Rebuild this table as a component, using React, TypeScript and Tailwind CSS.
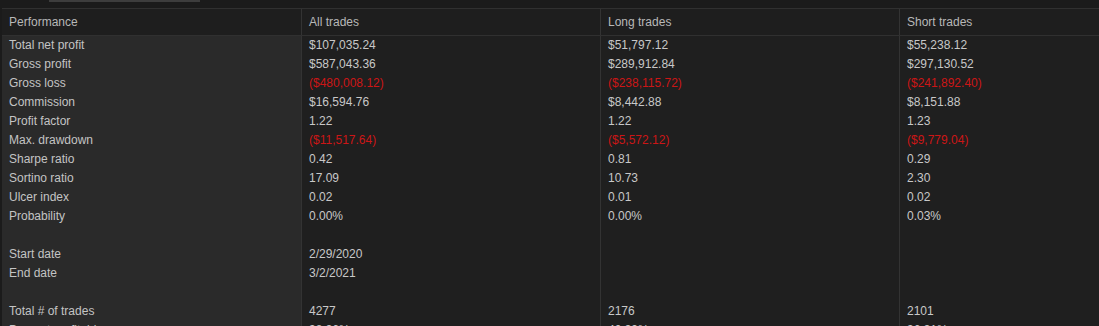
const rows: { label: string; all: string; long: string; short: string; neg?: boolean }[] = [
  { label: "Total net profit", all: "$107,035.24", long: "$51,797.12", short: "$55,238.12" },
  { label: "Gross profit", all: "$587,043.36", long: "$289,912.84", short: "$297,130.52" },
  { label: "Gross loss", all: "($480,008.12)", long: "($238,115.72)", short: "($241,892.40)", neg: true },
  { label: "Commission", all: "$16,594.76", long: "$8,442.88", short: "$8,151.88" },
  { label: "Profit factor", all: "1.22", long: "1.22", short: "1.23" },
  { label: "Max. drawdown", all: "($11,517.64)", long: "($5,572.12)", short: "($9,779.04)", neg: true },
  { label: "Sharpe ratio", all: "0.42", long: "0.81", short: "0.29" },
  { label: "Sortino ratio", all: "17.09", long: "10.73", short: "2.30" },
  { label: "Ulcer index", all: "0.02", long: "0.01", short: "0.02" },
  { label: "Probability", all: "0.00%", long: "0.00%", short: "0.03%" },
  { label: "", all: "", long: "", short: "" },
  { label: "Start date", all: "2/29/2020", long: "", short: "" },
  { label: "End date", all: "3/2/2021", long: "", short: "" },
  { label: "", all: "", long: "", short: "" },
  { label: "Total # of trades", all: "4277", long: "2176", short: "2101" },
  { label: "Percent profitable", all: "38.36%", long: "40.39%", short: "36.31%" },
];

function Cell({ value, neg, first }: { value: string; neg?: boolean; first?: boolean }) {
  return (
    <div
      className={`h-[19px] leading-[19px] px-[7px] whitespace-nowrap ${
        first ? "bg-[#2a2a2a] text-[#c4c4c4]" : "border-l border-[#333333] bg-[#1f1f1f]"
      } ${!first && neg ? "text-[#cc1616]" : !first ? "text-[#c8c8c8]" : ""}`}
    >
      {value}
    </div>
  );
}

export default function App() {
  return (
    <div className="w-[1099px] h-[326px] overflow-hidden bg-[#1b1b1b] text-[12px] font-['Liberation_Sans',Arial,sans-serif]">
      <div className="h-[8px] pl-[49px]">
        <div className="w-[151px] h-[2px] bg-[#3d3d3d]" />
      </div>

      <div className="pl-[2px]">
        <div className="grid grid-cols-[299px_299px_299px_1fr] border-t border-b border-[#303030] bg-[#1e1e1e] text-[#b8b8b8]">
          <div className="h-[26px] leading-[26px] px-[7px]">Performance</div>
          <div className="h-[26px] leading-[26px] px-[7px] border-l border-[#333333]">All trades</div>
          <div className="h-[26px] leading-[26px] px-[7px] border-l border-[#333333]">Long trades</div>
          <div className="h-[26px] leading-[26px] px-[7px] border-l border-[#333333]">Short trades</div>
        </div>

        <div className="grid grid-cols-[299px_299px_299px_1fr]">
          {rows.map((r, i) => (
            <div key={i} className="contents">
              <Cell value={r.label} first />
              <Cell value={r.all} neg={r.neg} />
              <Cell value={r.long} neg={r.neg} />
              <Cell value={r.short} neg={r.neg} />
            </div>
          ))}
        </div>
      </div>
    </div>
  );
}
